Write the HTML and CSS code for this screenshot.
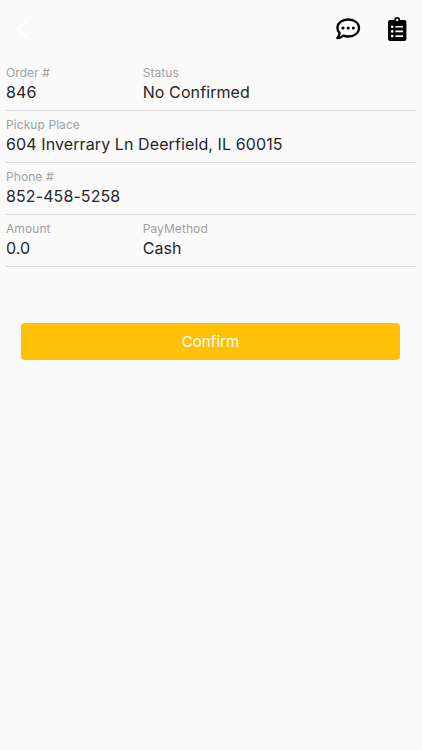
FILE: index.html
```
<!DOCTYPE html>
<html lang="en">
<head>
    <meta charset="UTF-8">
    <meta name="viewport" content="width=device-width, initial-scale=1.0">
    <title>Order 846</title>
    <link rel="stylesheet" href="styles.css">
</head>
<body>
    <header class="top-bar">
        <button class="icon-btn" aria-label="Back">
            <svg class="icon-back" viewBox="0 0 12 20">
                <path d="M10.5 1 L2 10 L10.5 19" />
            </svg>
        </button>
        <div class="top-actions">
            <button class="icon-btn" aria-label="Messages">
                <svg class="icon-chat" viewBox="0 0 26 24">
                    <path class="bubble" d="M13.2 2.5 C19.5 2.5 24 6.2 24 11 S19.5 19.5 13.2 19.5 C11.5 19.5 9.8 19.2 8.4 18.6 C6.7 20 4.7 21.1 2.2 21.1 C3.6 19.6 4.5 17.8 4.6 16.1 C3.2 14.7 2.4 12.9 2.4 11 C2.4 6.2 6.9 2.5 13.2 2.5 Z" />
                    <circle cx="8" cy="11" r="1.55" />
                    <circle cx="13.2" cy="11" r="1.55" />
                    <circle cx="18.4" cy="11" r="1.55" />
                </svg>
            </button>
            <button class="icon-btn" aria-label="Order details">
                <svg class="icon-list" viewBox="0 0 20 26">
                    <rect x="1" y="4" width="18.4" height="21" rx="2.2" />
                    <circle cx="10.2" cy="4" r="3" />
                    <circle class="cut" cx="10.2" cy="4" r="1.2" />
                    <path class="lines" d="M8.4 10.7 H16 M8.4 15.4 H16 M8.4 20.1 H16" />
                    <circle class="cut" cx="5.2" cy="10.7" r="1.3" />
                    <circle class="cut" cx="5.2" cy="15.4" r="1.3" />
                    <circle class="cut" cx="5.2" cy="20.1" r="1.3" />
                </svg>
            </button>
        </div>
    </header>

    <main>
        <dl class="order-info">
            <div class="info-row">
                <div class="info-field">
                    <dt>Order #</dt>
                    <dd>846</dd>
                </div>
                <div class="info-field">
                    <dt>Status</dt>
                    <dd>No Confirmed</dd>
                </div>
            </div>
            <div class="info-row">
                <div class="info-field info-field-wide">
                    <dt>Pickup Place</dt>
                    <dd>604 Inverrary Ln Deerfield, IL 60015</dd>
                </div>
            </div>
            <div class="info-row">
                <div class="info-field info-field-wide">
                    <dt>Phone #</dt>
                    <dd>852-458-5258</dd>
                </div>
            </div>
            <div class="info-row">
                <div class="info-field">
                    <dt>Amount</dt>
                    <dd>0.0</dd>
                </div>
                <div class="info-field">
                    <dt>PayMethod</dt>
                    <dd>Cash</dd>
                </div>
            </div>
        </dl>

        <button class="btn-confirm">Confirm</button>
    </main>
</body>
</html>
```
FILE: styles.css
```
:root {
    --background: #FAFAFA;
    --amber: #FFC107;
    --text: #262626;
    --label: #A0A0A0;
    --divider: #DCDCDC;
}

* {
    margin: 0;
    padding: 0;
    box-sizing: border-box;
}

body {
    font-family: Inter, Roboto, sans-serif;
    background: var(--background);
    color: var(--text);
    min-height: 100vh;
}

.top-bar {
    display: flex;
    align-items: center;
    justify-content: space-between;
    height: 59px;
    padding: 0 15px 2px 16px;
}

.top-actions {
    display: flex;
    align-items: center;
    gap: 26px;
}

.icon-btn {
    display: flex;
    background: none;
    border: none;
    cursor: pointer;
}

.icon-back {
    width: 12px;
    height: 20px;
    fill: none;
    stroke: #FFFFFF;
    stroke-width: 2.6;
}

.icon-chat {
    width: 26px;
    height: 24px;
}

.icon-chat .bubble {
    fill: none;
    stroke: #000000;
    stroke-width: 2.3;
    stroke-linejoin: round;
}

.icon-list {
    width: 20px;
    height: 26px;
}

.icon-list .cut {
    fill: var(--background);
}

.icon-list .lines {
    stroke: var(--background);
    stroke-width: 1.6;
}

.order-info {
    padding: 0 6px;
}

.info-row {
    display: grid;
    grid-template-columns: repeat(3, 1fr);
    height: 52px;
    padding-top: 6px;
    border-bottom: 1px solid var(--divider);
}

.info-field-wide {
    grid-column: 1 / -1;
}

dt {
    font-size: 12px;
    line-height: 15px;
    letter-spacing: 0.08px;
    color: var(--label);
}

dd {
    font-size: 16px;
    line-height: 24px;
    letter-spacing: 0.1px;
}

.btn-confirm {
    display: block;
    width: calc(100% - 43px);
    height: 37px;
    margin: 56px 22px 0 21px;
    border: none;
    border-radius: 4px;
    background: var(--amber);
    color: #FFFFFF;
    font-family: inherit;
    font-size: 15px;
    letter-spacing: 0.1px;
    cursor: pointer;
}
```
